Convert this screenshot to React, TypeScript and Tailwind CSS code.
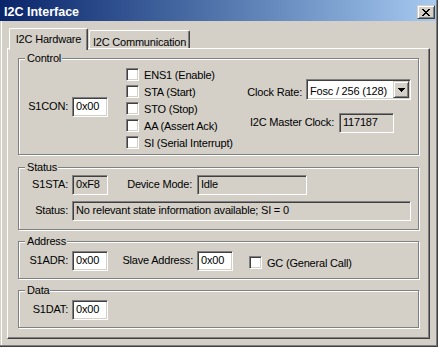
import React from "react";

const FONT =
  "font-['Liberation_Sans',Arial,sans-serif] text-[11px] tracking-[-0.2px] leading-[14px] text-black";

const SUNKEN =
  "border border-t-[#808080] border-l-[#808080] border-r-white border-b-white shadow-[inset_1px_1px_0_#404040,inset_-1px_-1px_0_#d4d0c8]";

const RAISED =
  "border border-t-[#d4d0c8] border-l-[#d4d0c8] border-r-[#404040] border-b-[#404040] shadow-[inset_1px_1px_0_#fff,inset_-1px_-1px_0_#808080] bg-[#d4d0c8]";

function Edit({ value, w, ro }: { value: string; w: string; ro?: boolean }) {
  return (
    <div
      className={`${SUNKEN} h-[20px] ${w} ${ro ? "bg-[#d4d0c8]" : "bg-white"} pl-[3px] pt-[1px] whitespace-nowrap overflow-hidden`}
    >
      {value}
    </div>
  );
}

function Label({ text, cls }: { text: string; cls: string }) {
  return <div className={`${cls} text-right pt-[2px] whitespace-nowrap`}>{text}</div>;
}

function Check({ label }: { label: string }) {
  return (
    <div className="flex items-center h-[17px]">
      <div className={`${SUNKEN} w-[13px] h-[13px] bg-white shrink-0`} />
      <span className="ml-[5px] whitespace-nowrap">{label}</span>
    </div>
  );
}

function Group({
  title,
  h,
  cls,
  children,
}: {
  title: string;
  h: string;
  cls: string;
  children: React.ReactNode;
}) {
  return (
    <div
      className={`relative w-[401px] ${h} ${cls} shrink-0 border border-[#808080] shadow-[inset_1px_1px_0_#fff,1px_1px_0_#fff]`}
    >
      <div className="absolute left-[6px] top-[-7px] bg-[#d4d0c8] pl-[2px] pr-[1px] leading-[13px] whitespace-nowrap">
        {title}
      </div>
      {children}
    </div>
  );
}

function CloseGlyph() {
  const px: [number, number][] = [
    [0, 0], [1, 0], [6, 0], [7, 0],
    [1, 1], [2, 1], [5, 1], [6, 1],
    [2, 2], [3, 2], [4, 2], [5, 2],
    [3, 3], [4, 3],
    [2, 4], [3, 4], [4, 4], [5, 4],
    [1, 5], [2, 5], [5, 5], [6, 5],
    [0, 6], [1, 6], [6, 6], [7, 6],
  ];
  return (
    <svg width="8" height="7" viewBox="0 0 8 7" shapeRendering="crispEdges">
      {px.map(([x, y], i) => (
        <rect key={i} x={x} y={y} width="1" height="1" fill="#000" />
      ))}
    </svg>
  );
}

function Arrow() {
  return (
    <svg width="7" height="4" viewBox="0 0 7 4" shapeRendering="crispEdges">
      <rect x="0" y="0" width="7" height="1" fill="#000" />
      <rect x="1" y="1" width="5" height="1" fill="#000" />
      <rect x="2" y="2" width="3" height="1" fill="#000" />
      <rect x="3" y="3" width="1" height="1" fill="#000" />
    </svg>
  );
}

export default function App() {
  return (
    <div
      className={`w-[438px] h-[347px] bg-[#d4d0c8] border-r border-b border-[#404040] flex flex-col ${FONT}`}
    >
      <div className="flex-1 flex flex-col shadow-[inset_-1px_-1px_0_#808080]">
        {/* Title bar */}
        <div className="h-[21px] mr-px flex items-start bg-linear-to-r from-[#0a246a] to-[#a6caf0] shrink-0">
          <div className="pl-[4px] pt-[5px] font-['Liberation_Sans',Arial,sans-serif] font-bold text-[12.5px] tracking-normal leading-[14px] text-white whitespace-nowrap">
            I2C Interface
          </div>
          <div className={`${RAISED} ml-auto mt-[5px] mr-[1px] w-[18px] h-[14px] flex items-center justify-center`}>
            <CloseGlyph />
          </div>
        </div>

        {/* Body */}
        <div className="flex-1 mb-px mx-px border-l border-white pl-[5px] pr-[6px] pt-[7px] pb-[6px] flex flex-col">
          {/* Tabs */}
          <div className="h-[20px] flex items-start pl-[2px] relative z-10 shrink-0">
            <div className="h-[22px] w-[79px] bg-[#d4d0c8] border-t border-l border-white border-r border-r-[#404040] shadow-[inset_-1px_0_0_#808080] rounded-t-[2px] text-center pt-[4px] leading-[13px] whitespace-nowrap">
              I2C Hardware
            </div>
            <div className="mt-[2px] ml-[1px] h-[18px] w-[101px] bg-[#d4d0c8] border-t border-l border-white border-r border-r-[#404040] shadow-[inset_-1px_0_0_#808080] rounded-t-[2px] text-center pt-[5px] leading-[13px] whitespace-nowrap">
              I2C Communication
            </div>
          </div>

          {/* Panel */}
          <div className="flex-1 border border-t-white border-l-white border-r-[#404040] border-b-[#404040] shadow-[inset_-1px_-1px_0_#808080] px-[10px] pt-[9px] flex flex-col">
            {/* Control */}
            <Group title="Control" h="h-[97px]" cls="">
              <div className="flex items-start">
                <Label text="S1CON:" cls="w-[51px] pr-[2px] mt-[38px]" />
                <div className="ml-[2px] mt-[38px]">
                  <Edit value="0x00" w="w-[36px]" />
                </div>
                <div className="ml-[18px] pt-[7px] w-[120px] flex flex-col">
                  <Check label="ENS1 (Enable)" />
                  <Check label="STA (Start)" />
                  <Check label="STO (Stop)" />
                  <Check label="AA (Assert Ack)" />
                  <Check label="SI (Serial Interrupt)" />
                </div>
                <div className="pt-[20px] flex flex-col">
                  <div className="flex items-start h-[21px]">
                    <div className="w-[60px] text-right pr-[4px] pt-[6px] whitespace-nowrap">Clock Rate:</div>
                    <div className={`${SUNKEN} w-[105px] h-[21px] bg-white flex items-start`}>
                      <span className="flex-1 pl-[3px] pt-[4px] whitespace-nowrap overflow-hidden">Fosc / 256 (128)</span>
                      <div className={`${RAISED} w-[16px] h-[17px] mt-[1px] mr-[1px] flex items-center justify-center shrink-0`}>
                        <Arrow />
                      </div>
                    </div>
                  </div>
                  <div className="flex items-start mt-[13px]">
                    <Label text="I2C Master Clock:" cls="w-[93px] pr-[5px]" />
                    <Edit value="117187" w="w-[55px]" ro />
                  </div>
                </div>
              </div>
            </Group>

            {/* Status */}
            <Group title="Status" h="h-[63px]" cls="mt-[12px]">
              <div className="flex items-start mt-[7px]">
                <Label text="S1STA:" cls="w-[51px] pr-[2px]" />
                <div className="ml-[2px]">
                  <Edit value="0xF8" w="w-[36px]" ro />
                </div>
                <Label text="Device Mode:" cls="w-[89px] pr-[5px]" />
                <Edit value="Idle" w="w-[110px]" ro />
              </div>
              <div className="flex items-start mt-[6px]">
                <Label text="Status:" cls="w-[51px] pr-[2px]" />
                <div className="ml-[2px]">
                  <Edit value="No relevant state information available; SI = 0" w="w-[339px]" ro />
                </div>
              </div>
            </Group>

            {/* Address */}
            <Group title="Address" h="h-[38px]" cls="mt-[11px]">
              <div className="flex items-start mt-[9px]">
                <Label text="S1ADR:" cls="w-[51px] pr-[2px]" />
                <div className="ml-[2px]">
                  <Edit value="0x00" w="w-[36px]" />
                </div>
                <Label text="Slave Address:" cls="w-[89px] pr-[4px]" />
                <Edit value="0x00" w="w-[36px]" />
                <div className="ml-[16px] mt-[3px]">
                  <Check label="GC (General Call)" />
                </div>
              </div>
            </Group>

            {/* Data */}
            <Group title="Data" h="h-[38px]" cls="mt-[11px]">
              <div className="flex items-start mt-[9px]">
                <Label text="S1DAT:" cls="w-[51px] pr-[2px]" />
                <div className="ml-[2px]">
                  <Edit value="0x00" w="w-[36px]" />
                </div>
              </div>
            </Group>
          </div>
        </div>
      </div>
    </div>
  );
}
